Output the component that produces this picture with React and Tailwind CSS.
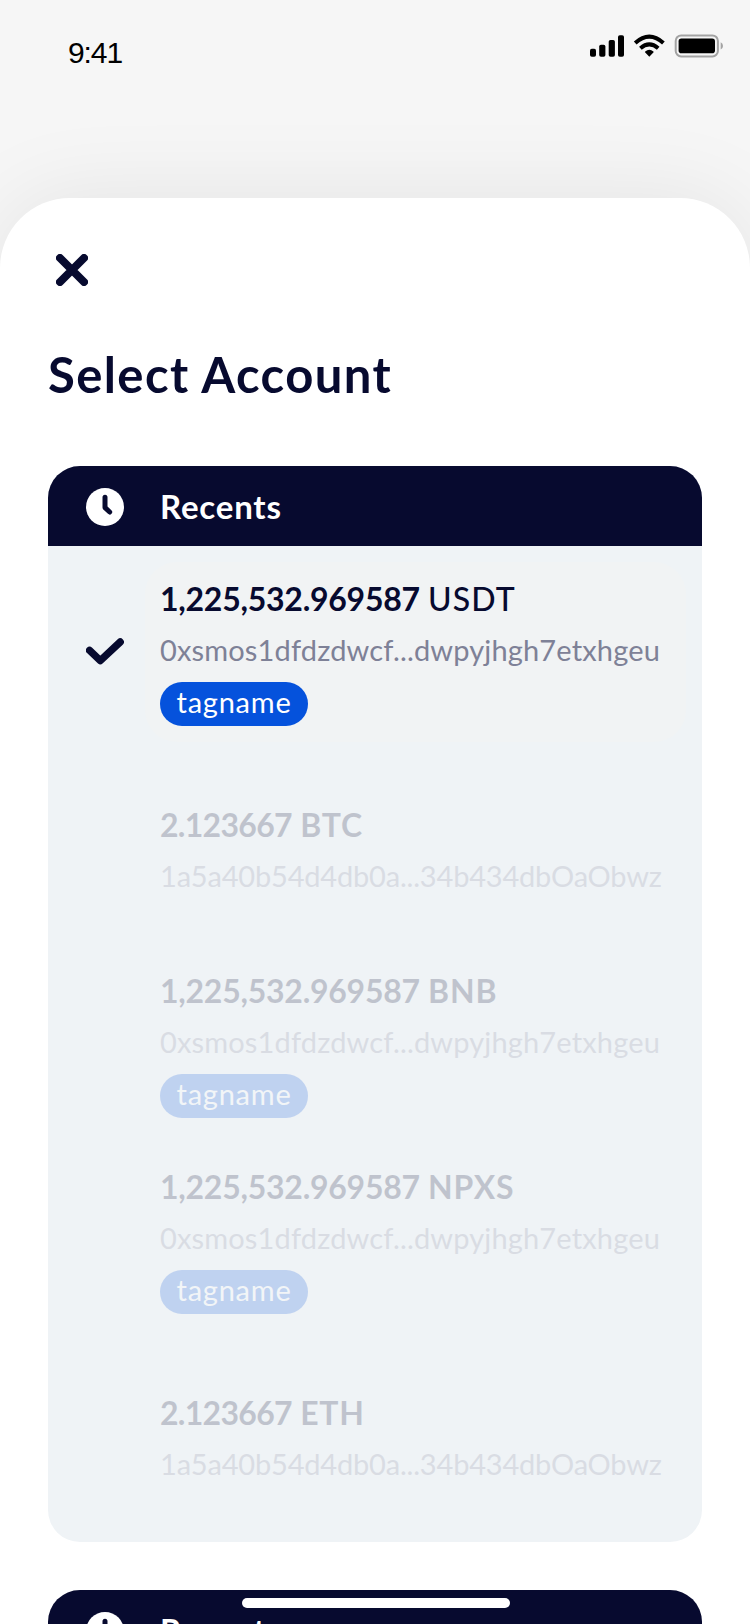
const tagged = { address: "0xsmos1dfdzdwcf...dwpyjhgh7etxhgeu", tag: "tagname" };
const plain = { address: "1a5a40b54d4db0a...34b434dbOaObwz" };

const accounts = [
  { amount: "1,225,532.969587", coin: "USDT", ...tagged, selected: true },
  { amount: "2.123667", coin: "BTC", ...plain },
  { amount: "1,225,532.969587", coin: "BNB", ...tagged },
  { amount: "1,225,532.969587", coin: "NPXS", ...tagged },
  { amount: "2.123667", coin: "ETH", ...plain },
];

function StatusBar() {
  return (
    <div className="flex h-[92px] shrink-0 items-start justify-between pl-[68px] pr-[26px]">
      <span className="mt-[35px] font-['Liberation_Sans',sans-serif] text-[30px] leading-[36px] tracking-[-1.1px] text-black">9:41</span>
      <svg className="mt-[32px]" width="136" height="28" viewBox="588 32 136 28" fill="none">
        <g fill="#000">
          <rect x="590" y="48.7" width="6" height="8" rx="1.8" />
          <rect x="599.2" y="44.7" width="6.2" height="12" rx="1.8" />
          <rect x="608.7" y="40" width="6.2" height="16.7" rx="1.8" />
          <rect x="618" y="35.3" width="6" height="21.4" rx="1.8" />
          <path d="M649.3 56.7 645 52.3Q644.7 51.9 645.2 51.5Q649.3 48.1 653.4 51.5Q653.9 51.9 653.6 52.3Z" />
          <rect x="678.6" y="38.6" width="36.4" height="14.6" rx="2.8" />
        </g>
        <g stroke="#000" strokeWidth="4">
          <path d="M635.2 42.9Q649.3 30.3 663.4 42.9" />
          <path d="M640.4 48.2Q649.3 40.5 658.2 48.2" />
        </g>
        <rect x="675.7" y="35.4" width="42.2" height="21" rx="5.5" stroke="#a3a3a3" strokeWidth="2" />
        <path d="M720.7 42.2Q723 43.4 723 45.9Q723 48.4 720.7 49.6Z" fill="#a3a3a3" />
      </svg>
    </div>
  );
}

function SectionHeader() {
  return (
    <div className="flex h-20 shrink-0 items-center bg-[#070a2f] pt-[2px] pl-[38px] text-white">
      <svg width="38" height="38" viewBox="0 0 38 38" fill="none">
        <circle cx="19" cy="19" r="19" fill="#fff" />
        <path d="M19 9.3V19.6L23.7 24" stroke="#070a2f" strokeWidth="5" strokeLinecap="round" strokeLinejoin="round" />
      </svg>
      <span className="ml-[36px] pb-[3px] text-[33px] leading-[38px] font-bold tracking-[0.8px]">Recents</span>
    </div>
  );
}

function AccountRow({ amount, coin, address, tag, selected }) {
  return (
    <div className={`flex h-[196px] items-center ${selected ? "" : "opacity-20"}`}>
      <div className="flex w-[97px] shrink-0 justify-start pl-[38px]">
        {selected && (
          <svg width="38" height="28" viewBox="0 0 38 28" fill="none">
            <path d="M3.6 12.4 14.3 22.6 34.2 4" stroke="#070a2f" strokeWidth="7.4" strokeLinecap="round" strokeLinejoin="round" />
          </svg>
        )}
      </div>
      <div className={`flex h-[180px] w-[541px] flex-col items-start rounded-[32px] pl-[15px] whitespace-nowrap ${tag ? "pt-[13px]" : "pt-[43px]"} ${selected ? "bg-[#f1f3f4]" : ""}`}>
        <div className="text-[32px] leading-[48px] text-[#070a2f]">
          <span className={`font-bold ${tag ? "tracking-[-0.25px]" : "tracking-[-0.7px]"}`}>{amount}</span>{" "}
          <span className={selected ? "font-medium tracking-[1.1px]" : "font-bold tracking-[0.8px]"}>{coin}</span>
        </div>
        <div className={`text-[29px] leading-[53px] ${tag ? "tracking-[0.15px]" : "tracking-[-0.19px]"} ${selected ? "text-[#7e8197]" : "text-[#83869c]"}`}>{address}</div>
        {tag && (
          <div className="mt-[6px] flex h-[44px] w-[148px] items-start justify-center rounded-full bg-[#0552dc] text-[29px] leading-[39px] tracking-[0.75px] text-white">
            {tag}
          </div>
        )}
      </div>
    </div>
  );
}

export default function App() {
  return (
    <div className="relative flex h-[1624px] w-[750px] flex-col overflow-hidden bg-[#f6f6f6] font-[Lato,sans-serif]">
      <StatusBar />
      <main className="mt-[106px] flex h-[1426px] shrink-0 flex-col rounded-t-[70px] bg-white px-12 shadow-[0_0_90px_rgba(0,0,0,0.08)]">
        <button className="mt-[56px] ml-[8px] h-8 w-8" aria-label="Close">
          <svg width="32" height="32" viewBox="0 0 32 32" fill="none">
            <path d="M4 4 28 28M28 4 4 28" stroke="#070a2f" strokeWidth="8" strokeLinecap="round" />
          </svg>
        </button>
        <h1 className="mt-[58px] h-[60px] text-[49px] leading-[60px] font-bold tracking-[1.4px] text-[#070a2f]">Select Account</h1>
        <section className="mt-[62px] shrink-0 overflow-hidden rounded-[32px] bg-[#eff3f6]">
          <SectionHeader />
          <div className="py-2">
            {accounts.map((a) => <AccountRow key={a.coin} {...a} />)}
          </div>
        </section>
        <section className="mt-12 shrink-0 overflow-hidden rounded-t-[32px]">
          <SectionHeader />
        </section>
      </main>
      <div className="absolute top-[1598px] left-[242px] h-[10px] w-[268px] rounded-[5px] bg-white" />
    </div>
  );
}
